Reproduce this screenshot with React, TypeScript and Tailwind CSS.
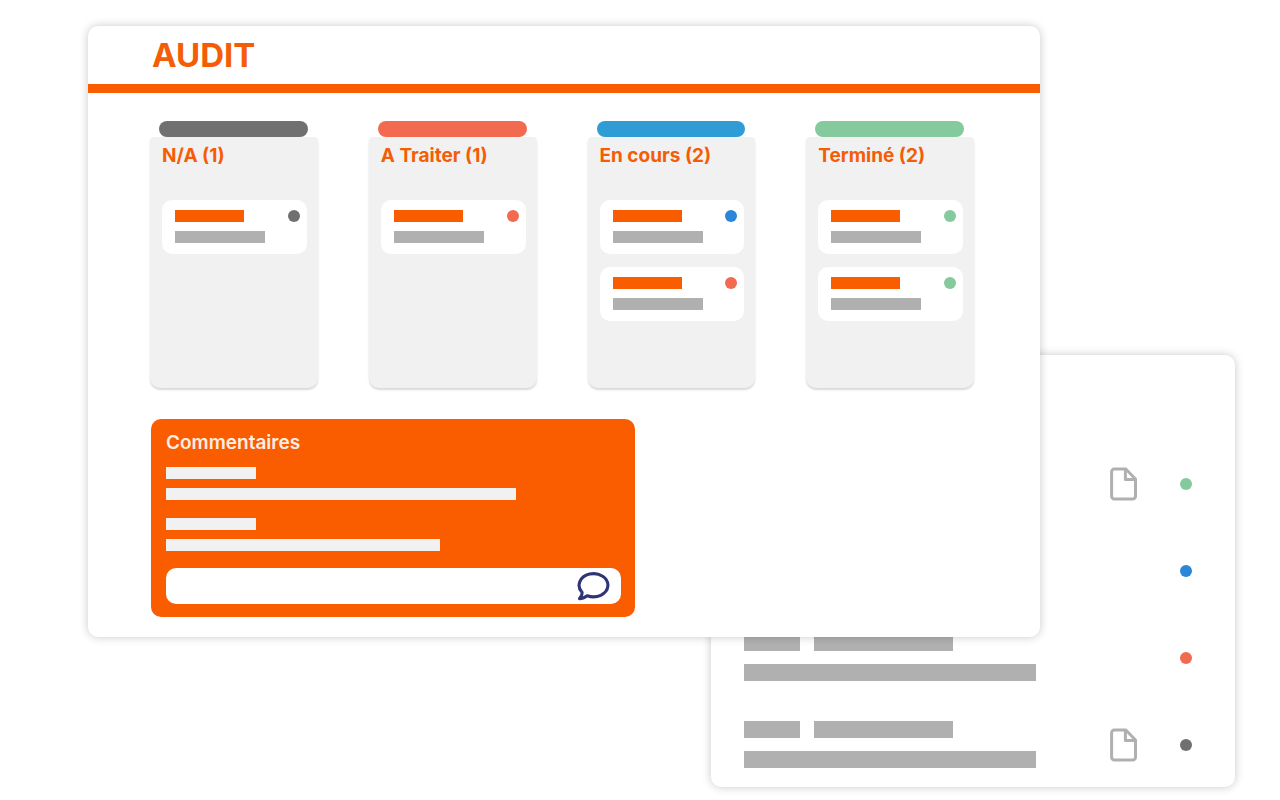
import React, { useState } from 'react'
import clsx from 'clsx'

type Status = 'none' | 'todo' | 'doing' | 'done'

interface Column {
  title: string
  tab: string
  cards: Status[]
}

const dotColors: Record<Status, string> = {
  none: 'bg-[#707070]',
  todo: 'bg-[#f26b50]',
  doing: 'bg-[#2a86d6]',
  done: 'bg-[#84ca9c]',
}

const columns: Column[] = [
  { title: 'N/A (1)', tab: 'bg-[#707070]', cards: ['none'] },
  { title: 'A Traiter (1)', tab: 'bg-[#f26b50]', cards: ['todo'] },
  { title: 'En cours (2)', tab: 'bg-[#2f9cd6]', cards: ['doing', 'todo'] },
  { title: 'Terminé (2)', tab: 'bg-[#84ca9c]', cards: ['done', 'done'] },
]

const documents: Array<{ status: Status; hasFile: boolean }> = [
  { status: 'done', hasFile: true },
  { status: 'doing', hasFile: false },
  { status: 'todo', hasFile: false },
  { status: 'none', hasFile: true },
]

function Dot({ status }: { status: Status }) {
  return <span className={clsx('w-3 h-3 shrink-0 rounded-full', dotColors[status])} />
}

function FileIcon() {
  return (
    <svg className="w-7 h-[34px]" viewBox="0 0 28 34" fill="none" stroke="#b0b0b0" strokeWidth="3" strokeLinejoin="round">
      <path d="M4.4 2H15.8L25.5 12V29.2A2.8 2.8 0 0 1 22.7 32H4.4A2.8 2.8 0 0 1 1.6 29.2V4.8A2.8 2.8 0 0 1 4.4 2Z" />
      <path d="M15.4 2.2V12.4H25.4" />
    </svg>
  )
}

function ChatIcon() {
  return (
    <svg className="w-[34px] h-[30px]" viewBox="0 0 34 30" fill="none" stroke="#2f3478" strokeWidth="3.1" strokeLinejoin="round">
      <path d="M5 21.2A14.4 11.6 0 1 1 10.3 24.7C8.3 26 5.5 27.9 2.5 27.6C4.2 25.6 5.6 23.8 5 21.2Z" />
    </svg>
  )
}

function TaskCard({ status }: { status: Status }) {
  return (
    <div className="flex justify-between items-start rounded-[10px] bg-white pt-[10px] pb-[11px] pl-[13px] pr-[7px]">
      <div className="flex flex-col gap-[9px]">
        <div className="w-[69px] h-3 bg-[#fa5c00]" />
        <div className="w-[90px] h-3 bg-[#b0b0b0]" />
      </div>
      <Dot status={status} />
    </div>
  )
}

function BoardColumn({ column }: { column: Column }) {
  return (
    <section className="flex flex-col">
      <div className={clsx('h-4 ml-[9px] mr-[10px] rounded-lg', column.tab)} />
      <div className="min-h-[251px] rounded-t-[4px] rounded-b-[10px] bg-[#f1f1f1] pl-3 pr-[11px] shadow-[0_2px_2px_rgba(0,0,0,0.15)]">
        <h2 className="h-[63px] pt-[7px] text-[19px] leading-6 font-bold text-[#f45d06] whitespace-nowrap">{column.title}</h2>
        <div className="flex flex-col gap-[13px]">
          {column.cards.map((status, i) => (
            <TaskCard key={i} status={status} />
          ))}
        </div>
      </div>
    </section>
  )
}

function Comments() {
  const [comment, setComment] = useState('')

  return (
    <section className="ml-[63px] mr-[405px] mt-[31px] mb-5 rounded-[10px] bg-[#fa5c00] pt-3 pb-[13px] pl-[15px] pr-[14px]">
      <h2 className="text-[19px] leading-6 font-semibold text-[#fdeee4]">Commentaires</h2>
      <div className="flex flex-col gap-[9px] mt-3">
        <div className="w-[90px] h-3 bg-[#f1f1f1]" />
        <div className="w-[350px] h-3 bg-[#f1f1f1]" />
      </div>
      <div className="flex flex-col gap-[9px] mt-[18px]">
        <div className="w-[90px] h-3 bg-[#f1f1f1]" />
        <div className="w-[274px] h-3 bg-[#f1f1f1]" />
      </div>
      <form
        className="flex items-center h-9 mt-[17px] rounded-[10px] bg-white pr-[10px]"
        onSubmit={(e) => {
          e.preventDefault()
          setComment('')
        }}
      >
        <input
          type="text"
          aria-label="Commentaire"
          className="min-w-0 flex-1 h-full px-3 bg-transparent outline-none"
          value={comment}
          onChange={(e) => setComment(e.target.value)}
        />
        <button type="submit" aria-label="Envoyer">
          <ChatIcon />
        </button>
      </form>
    </section>
  )
}

export default function App() {
  return (
    <main className="grid items-start bg-white pt-[26px] pb-[13px] pl-[88px] pr-[45px] font-['Inter',sans-serif]">
      {/* Document list, behind the board */}
      <section className="col-start-1 row-start-1 flex flex-col gap-10 ml-[623px] mt-[329px] rounded-[10px] bg-white pt-[105px] pb-[19px] pl-[33px] pr-[43px] shadow-[0_0_10px_rgba(0,0,0,0.22)]">
        {documents.map((doc, i) => (
          <div key={i} className="flex items-center">
            <div className="flex flex-col gap-[13px]">
              <div className="flex gap-[14px]">
                <div className="w-14 h-[17px] bg-[#b0b0b0]" />
                <div className="w-[139px] h-[17px] bg-[#b0b0b0]" />
              </div>
              <div className="w-[292px] h-[17px] bg-[#b0b0b0]" />
            </div>
            <div className="flex flex-1 items-center justify-end gap-[42px]">
              {doc.hasFile && <FileIcon />}
              <Dot status={doc.status} />
            </div>
          </div>
        ))}
      </section>

      {/* Audit board */}
      <section className="col-start-1 row-start-1 z-10 mr-[195px] overflow-hidden rounded-[10px] bg-white shadow-[0_0_10px_rgba(0,0,0,0.22)]">
        <header className="h-[67px] border-b-[9px] border-[#fa5c00] pl-16 pt-[9px]">
          <h1 className="text-[33px] leading-10 font-bold text-[#f45d06]">AUDIT</h1>
        </header>
        <div className="grid grid-cols-4 gap-[51px] pt-7 pl-[62px] pr-[66px]">
          {columns.map((column) => (
            <BoardColumn key={column.title} column={column} />
          ))}
        </div>
        <Comments />
      </section>
    </main>
  )
}
